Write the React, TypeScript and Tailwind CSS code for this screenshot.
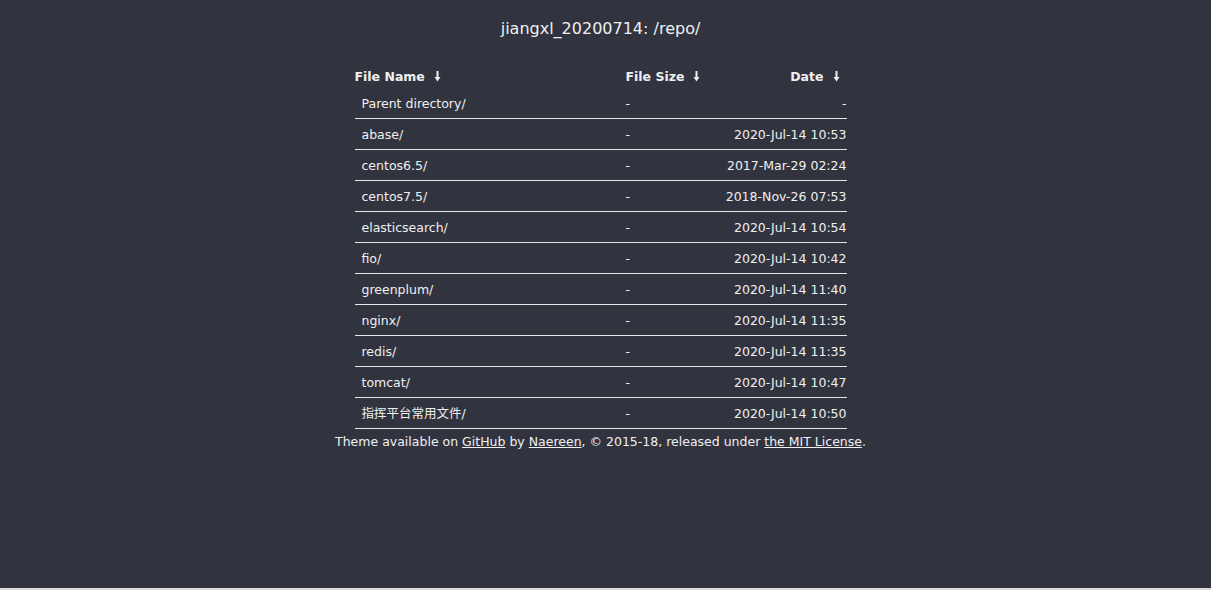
import React from 'react'

const rows = [
  { name: 'Parent directory/', size: '-', date: '-' },
  { name: 'abase/', size: '-', date: '2020-Jul-14 10:53' },
  { name: 'centos6.5/', size: '-', date: '2017-Mar-29 02:24' },
  { name: 'centos7.5/', size: '-', date: '2018-Nov-26 07:53' },
  { name: 'elasticsearch/', size: '-', date: '2020-Jul-14 10:54' },
  { name: 'fio/', size: '-', date: '2020-Jul-14 10:42' },
  { name: 'greenplum/', size: '-', date: '2020-Jul-14 11:40' },
  { name: 'nginx/', size: '-', date: '2020-Jul-14 11:35' },
  { name: 'redis/', size: '-', date: '2020-Jul-14 11:35' },
  { name: 'tomcat/', size: '-', date: '2020-Jul-14 10:47' },
  { name: '指挥平台常用文件/', size: '-', date: '2020-Jul-14 10:50' },
]

function SortArrow() {
  return (
    <svg width="7" height="11" viewBox="0 0 7 11" className="inline-block ml-[9px] align-[-1px]">
      <path d="M3.5 0v8" stroke="currentColor" strokeWidth="2" />
      <path d="M0.5 6h6L3.5 10.5z" fill="currentColor" />
    </svg>
  )
}

export default function App() {
  return (
    <div className="h-[590px] bg-[#dcdcdc]">
      <div
        className="h-[588px] bg-[#31343f] text-[#f0f0f0] flex flex-col items-center pr-[10px]"
        style={{ fontFamily: '"DejaVu Sans", Verdana, "Noto Sans CJK SC", sans-serif' }}
      >
        <h1 className="text-[16px] font-normal mt-[18px] leading-[21px]">jiangxl_20200714: /repo/</h1>

        <div className="w-[492px] mt-[24px] text-[12.5px]">
          <div className="grid grid-cols-[271px_1fr_auto] h-[25px] pt-[4px] items-center font-bold">
            <div>File Name<SortArrow /></div>
            <div>File Size<SortArrow /></div>
            <div className="pr-[7px]">Date<SortArrow /></div>
          </div>
          {rows.map((r) => (
            <div
              key={r.name}
              className="grid grid-cols-[271px_1fr_auto] h-[31px] pt-[2px] items-center border-b border-[#e6e6e6]"
            >
              <div className="pl-[7px]">{r.name}</div>
              <div>{r.size}</div>
              <div className="text-right">{r.date}</div>
            </div>
          ))}
        </div>

        <p className="text-[12.5px] mt-[5px] leading-[16px]">
          Theme available on <a className="underline">GitHub</a> by <a className="underline">Naereen</a>, © 2015-18, released under <a className="underline">the MIT License</a>.
        </p>
      </div>
    </div>
  )
}
